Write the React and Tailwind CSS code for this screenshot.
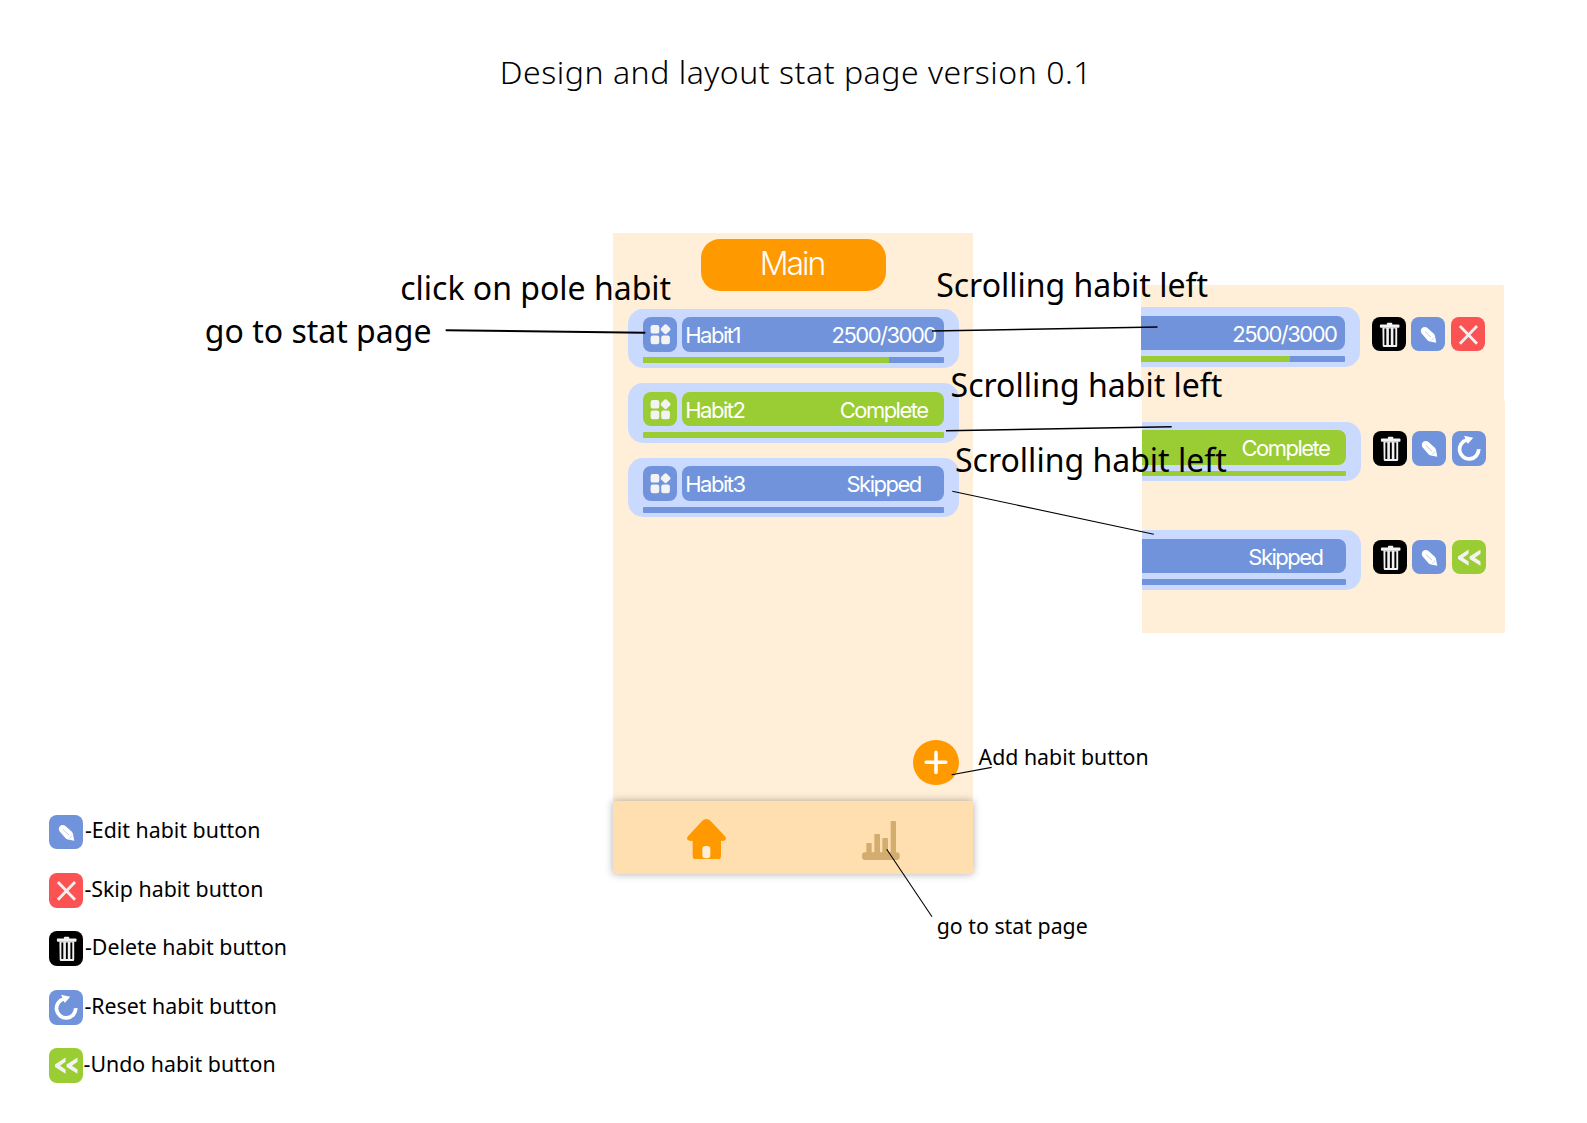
import React from 'react';

const TILE_COLORS = {
  blue: 'bg-[#7093db]',
  green: 'bg-[#9acc33]',
  red: 'bg-[#fb5353]',
  black: 'bg-black',
};

function Tile({ color, children }) {
  return (
    <div className={`h-[34.6px] w-[34px] shrink-0 rounded-lg ${TILE_COLORS[color]}`}>
      <svg viewBox="0 0 34 34.6" className="block h-full w-full">{children}</svg>
    </div>
  );
}

function GridTile({ color }) {
  return (
    <Tile color={color}>
      <g fill="#f3f3f3">
        <rect x="7.6" y="8" width="8.7" height="8.6" rx="2.2" />
        <rect x="7.6" y="18.6" width="8.7" height="8.6" rx="2.2" />
        <rect x="18.2" y="18.6" width="8.7" height="8.6" rx="2.2" />
        <rect x="18.6" y="8.2" width="8" height="8" rx="1.8" transform="rotate(45 22.6 12.2)" />
      </g>
    </Tile>
  );
}

function EditTile() {
  return (
    <Tile color="blue">
      <path fill="#fff" d="M10.7 16.6C9.4 14.6 9.5 12.2 11 10.9C12.6 9.6 14.9 9.8 16.5 11L22.8 16.8C23.6 17.7 23.9 18.5 24.1 19.5L25.3 25.8L18.8 24.6C17.8 24.4 17 23.9 16.3 23.1Z" />
      <path fill="none" stroke="#7093db" strokeWidth="0.7" strokeDasharray="1 0.4" d="M14.3 14.8L20.4 20.6" />
      <path fill="none" stroke="#a9bfea" strokeWidth="0.7" d="M20.2 23.4L23.2 20.6" />
    </Tile>
  );
}

function SkipTile() {
  return (
    <Tile color="red">
      <path d="M8.9 9L26 26.8M26 9L8.9 26.8" stroke="#f5f0f0" strokeWidth="2.8" fill="none" />
    </Tile>
  );
}

function DeleteTile() {
  return (
    <Tile color="black">
      <g fill="#f3f1f1">
        <rect x="14.9" y="5.7" width="5.4" height="3" rx="1" />
        <rect x="7.9" y="7.6" width="19.6" height="3.2" rx="1" />
        <path fillRule="evenodd" d="M10.4 10.4H25.2V28.8Q25.2 30 24 30H12Q10.8 30 10.7 28.8ZM12.4 11.6V28H14.3V11.6ZM16.9 11.6V28H18.8V11.6ZM21.4 11.6V28H23.3V11.6Z" />
      </g>
    </Tile>
  );
}

function ResetTile() {
  return (
    <Tile color="blue">
      <path d="M26.7 18.1A9.6 9.6 0 1 1 14.6 9" fill="none" stroke="#fff" strokeWidth="3.8" />
      <path d="M12.1 4.8L21.2 6.8L15.8 13L14.2 9.4Z" fill="#fff" />
    </Tile>
  );
}

function UndoTile() {
  return (
    <Tile color="green">
      <g fill="#f3f3f3">
        <path d="M16.6 9.5V13.7L11 17.7L16.6 21.6V25.8L6 18.9V16.5Z" />
        <path d="M28.5 9.5V13.7L22.9 17.7L28.5 21.6V25.8L17.6 18.9V16.5Z" />
      </g>
    </Tile>
  );
}

function HabitCard({ name, value, color = 'blue', progress, clipped = false }) {
  return (
    <div
      className={`flex h-[59.5px] shrink-0 flex-col gap-[5.7px] bg-[#cadaff] pt-[8.5px] pr-[15.3px] ${
        clipped ? 'w-[219px] rounded-r-[15px]' : 'w-[331px] rounded-[15px] pl-[15.3px]'
      }`}
    >
      <div className="flex h-[34.6px] gap-[5px]">
        {!clipped && <GridTile color={color} />}
        <div
          className={`flex flex-1 items-center justify-between pt-[1.2px] pl-[2.8px] font-['Inter',sans-serif] text-[22px] leading-none font-[370] tracking-[-0.069em] text-white ${
            clipped ? 'rounded-r-lg' : 'rounded-lg'
          } ${TILE_COLORS[color]}`}
        >
          <span>{name}</span>
          <span className="w-[120.6px] text-center">{value}</span>
        </div>
      </div>
      <div className={`h-[5.8px] overflow-hidden bg-[#7093db] ${clipped ? 'rounded-r-[1px]' : 'rounded-[1px]'}`}>
        <div className="h-full bg-[#9acc33]" style={{ width: `${progress}%` }} />
      </div>
    </div>
  );
}

function SwipedHabit({ children, ...card }) {
  return (
    <div className="flex">
      <HabitCard clipped {...card} />
      <div className="ml-[11.8px] flex gap-[5.4px] pt-[9.4px]">{children}</div>
    </div>
  );
}

function HomeIcon() {
  return (
    <svg viewBox="20 26 117 121" className="h-[40.3px] w-[39px]">
      <path
        fill="#ff9900"
        d="M65 32Q78 20 91 32L134 78Q139 84 135 89Q132 92 122 92V137Q122 147 112 147H47Q37 147 37 137V92Q25 92 22 89Q18 84 23 78Z"
      />
      <rect x="66" y="107" width="24" height="37" rx="10" fill="#ffefd9" />
    </svg>
  );
}

function StatIcon() {
  return (
    <svg viewBox="21 30 113 117" className="h-[39px] w-[37.7px]" fill="#d3ad6f">
      <rect x="21" y="124" width="113" height="23" rx="9" />
      <rect x="34" y="96" width="16" height="40" rx="3" />
      <rect x="58" y="69" width="17" height="66" rx="3" />
      <rect x="82" y="81" width="17" height="54" rx="3" />
      <rect x="107" y="30" width="16" height="105" rx="3" />
    </svg>
  );
}

function Phone() {
  return (
    <section className="mt-[233.4px] ml-[613.4px] flex h-[640.5px] w-[360px] shrink-0 flex-col bg-[#ffefd9]">
      <header className="mt-[5.5px] ml-[87.6px] flex h-[51.7px] w-[185px] items-center justify-center rounded-[19px] bg-[#ff9900] pr-[3px] pb-[2px] font-['Inter',sans-serif] text-[32px] leading-none font-[350] tracking-[-0.064em] text-white">
        Main
      </header>
      <div className="mt-[18px] ml-[14.8px] flex flex-col gap-[15.2px]">
        <HabitCard name="Habit1" value="2500/3000" progress={81.7} />
        <HabitCard name="Habit2" value="Complete" color="green" progress={100} />
        <HabitCard name="Habit3" value="Skipped" progress={0} />
      </div>
      <div className="mt-auto mr-[14.6px] mb-[16px] flex h-[45.8px] w-[45.8px] items-center justify-center self-end rounded-full bg-[#ff9900]">
        <svg viewBox="0 0 24 24" className="h-6 w-6">
          <path d="M12 2.2V22.4M2.2 12.3H21.8" stroke="#fff" strokeWidth="3.5" strokeLinecap="round" />
        </svg>
      </div>
      <nav className="flex h-[72.6px] items-start bg-[#ffdfb0] pt-[17.5px] shadow-[0_0_8px_rgba(0,0,0,0.32)]">
        <div className="ml-[73.4px]"><HomeIcon /></div>
        <div className="mt-[1.8px] ml-[136.3px]"><StatIcon /></div>
      </nav>
    </section>
  );
}

function SwipePanels() {
  return (
    <section className="mt-[285.2px] ml-[167.6px] flex w-[364px] shrink-0 flex-col">
      <div className="h-[115px] w-[363px] rounded-tr-[2px] bg-[#ffefd9] pt-[22px]">
        <SwipedHabit value="2500/3000" progress={73}>
          <DeleteTile />
          <EditTile />
          <SkipTile />
        </SwipedHabit>
      </div>
      <div className="ml-px flex h-[232.6px] w-[363px] flex-col gap-[48.8px] rounded-r-[2px] bg-[#ffefd9] pt-[21.7px]">
        <SwipedHabit value="Complete" color="green" progress={100}>
          <DeleteTile />
          <EditTile />
          <ResetTile />
        </SwipedHabit>
        <SwipedHabit value="Skipped" progress={0}>
          <DeleteTile />
          <EditTile />
          <UndoTile />
        </SwipedHabit>
      </div>
    </section>
  );
}

const LEGEND = [
  { Icon: EditTile, label: '-Edit habit button', gap: 'ml-[1.6px]' },
  { Icon: SkipTile, label: '-Skip habit button', gap: 'ml-[1px]' },
  { Icon: DeleteTile, label: '-Delete habit button', gap: 'ml-[1.6px]' },
  { Icon: ResetTile, label: '-Reset habit button', gap: 'ml-[1px]' },
  { Icon: UndoTile, label: '-Undo habit button', gap: 'ml-[0.2px]' },
];

function Legend() {
  return (
    <ul className="absolute top-[814.5px] left-[49.4px] flex flex-col gap-[23.9px]">
      {LEGEND.map(({ Icon, label, gap }) => (
        <li key={label} className="flex items-center">
          <Icon />
          <span className={`pb-[3.8px] text-[21.33px] leading-none ${gap}`}>{label}</span>
        </li>
      ))}
    </ul>
  );
}

const NOTES = [
  { text: 'click on pole habit', place: 'top-[272px] left-[400.2px] text-[32px]' },
  { text: 'go to stat page', place: 'top-[315px] left-[204.8px] text-[32px]' },
  { text: 'Scrolling habit left', place: 'top-[268.5px] left-[936.2px] text-[32px]' },
  { text: 'Scrolling habit left', place: 'top-[369px] left-[950.6px] text-[32px]' },
  { text: 'Scrolling habit left', place: 'top-[444px] left-[955px] text-[32px]' },
  { text: 'Add habit button', place: 'top-[746px] left-[978.5px] text-[21.33px]' },
  { text: 'go to stat page', place: 'top-[915px] left-[936.7px] text-[21.33px]' },
];

function Connectors() {
  return (
    <svg viewBox="0 0 1587 1123" className="pointer-events-none absolute inset-0 h-full w-full" stroke="#000" fill="none">
      <path d="M445.7 330.3L645.3 332.7" strokeWidth="2.1" />
      <path d="M932 331L1157.5 327" strokeWidth="1.4" />
      <path d="M946 430.8L1171.7 426.7" strokeWidth="1.4" />
      <path d="M952.3 491.3L1153.8 534.2" strokeWidth="1.1" />
      <path d="M951.6 774.8L991.6 767.4" strokeWidth="1.1" />
      <path d="M886.7 849.3L932 916.7" strokeWidth="1.1" />
    </svg>
  );
}

export default function App() {
  return (
    <main className="relative flex h-[1123px] w-[1587px] items-start overflow-hidden bg-white font-['Noto_Sans',sans-serif] text-black">
      <Phone />
      <SwipePanels />
      <Legend />
      <h1 className="absolute top-[56px] left-[499.8px] text-[32px] leading-none font-[270] tracking-[0.52px] whitespace-nowrap">
        Design and layout stat page version 0.1
      </h1>
      {NOTES.map(({ text, place }) => (
        <p key={place} className={`absolute leading-none whitespace-nowrap ${place}`}>{text}</p>
      ))}
      <Connectors />
    </main>
  );
}
